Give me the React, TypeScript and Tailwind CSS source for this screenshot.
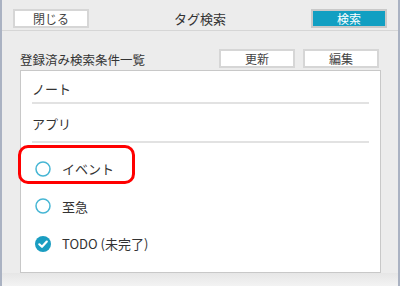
import React from 'react';

type Item = { id: string; label: string; checked?: boolean };

const items: Item[] = [
  { id: 'event', label: 'イベント' },
  { id: 'urgent', label: '至急' },
  { id: 'todo', label: 'TODO (未完了)', checked: true },
];

function Btn({ label, primary }: { label: string; primary?: boolean }) {
  return (
    <button
      className={`w-[76px] h-[19px] flex items-center justify-center text-[12px] leading-none border-2 ${
        primary ? 'bg-[#119fc2] text-white border-[#c9c9c9]' : 'bg-white text-[#444] border-[#d6d6d6]'
      }`}
    >
      {label}
    </button>
  );
}

function Radio({ checked }: { checked?: boolean }) {
  if (checked) {
    return (
      <svg width="16" height="16" viewBox="0 0 16 16" className="shrink-0">
        <circle cx="8" cy="8" r="8" fill="#1a9dc1" />
        <path d="M4.3 8.3 L7 10.8 L11.8 5.6" fill="none" stroke="white" strokeWidth="2.2" strokeLinecap="round" strokeLinejoin="round" />
      </svg>
    );
  }
  return (
    <svg width="16" height="16" viewBox="0 0 16 16" className="shrink-0">
      <circle cx="8" cy="8" r="7" fill="white" stroke="#46b6d4" strokeWidth="1.5" />
    </svg>
  );
}

export default function App() {
  return (
    <div
      className="relative w-[400px] h-[286px] flex flex-col bg-[#ececec] border-x-2 border-[#aab2c2] text-[#333]"
      style={{ fontFamily: '"Noto Sans CJK JP", "Noto Sans", sans-serif' }}
    >
      {/* Header */}
      <div className="h-[31px] shrink-0 flex items-start justify-between pt-[9px] px-[11px] border-b border-[#d6d6d6]">
        <Btn label="閉じる" />
        <div className="text-[13px] leading-[19px] text-[#333]">タグ検索</div>
        <Btn label="検索" primary />
      </div>

      {/* Saved conditions */}
      <div className="flex items-end justify-between mt-[18px] pl-[18px] pr-[19px]">
        <div className="text-[12.5px] leading-[16px]">登録済み検索条件一覧</div>
        <div className="flex gap-[8px]">
          <Btn label="更新" />
          <Btn label="編集" />
        </div>
      </div>

      <div className="mt-[2px] ml-[18px] mr-[17px] h-[203px] shrink-0 bg-white border border-[#c8c8c8] flex flex-col">
        <div className="h-[33px] flex items-center pt-[5px] mx-[11px] border-b-2 border-[#e2e2e2] text-[13px]">ノート</div>
        <div className="h-[39px] flex items-center pt-[3px] mx-[11px] border-b-2 border-[#e2e2e2] text-[13px]">アプリ</div>
        <div className="flex flex-col pt-[7px]">
          {items.map((it) => (
            <div key={it.id} className="h-[37.5px] flex items-center gap-[11px] pl-[14px] text-[13px]">
              <Radio checked={it.checked} />
              <span>{it.label}</span>
            </div>
          ))}
        </div>
      </div>

      <div className="flex-1 bg-gradient-to-b from-[#e6e6e6] to-[#f3f3f3]" />

      {/* highlight annotation */}
      <div className="absolute left-[16px] top-[145px] w-[117px] h-[39px] rounded-[10px] border-[3.5px] border-[#ff0000]" />
    </div>
  );
}
